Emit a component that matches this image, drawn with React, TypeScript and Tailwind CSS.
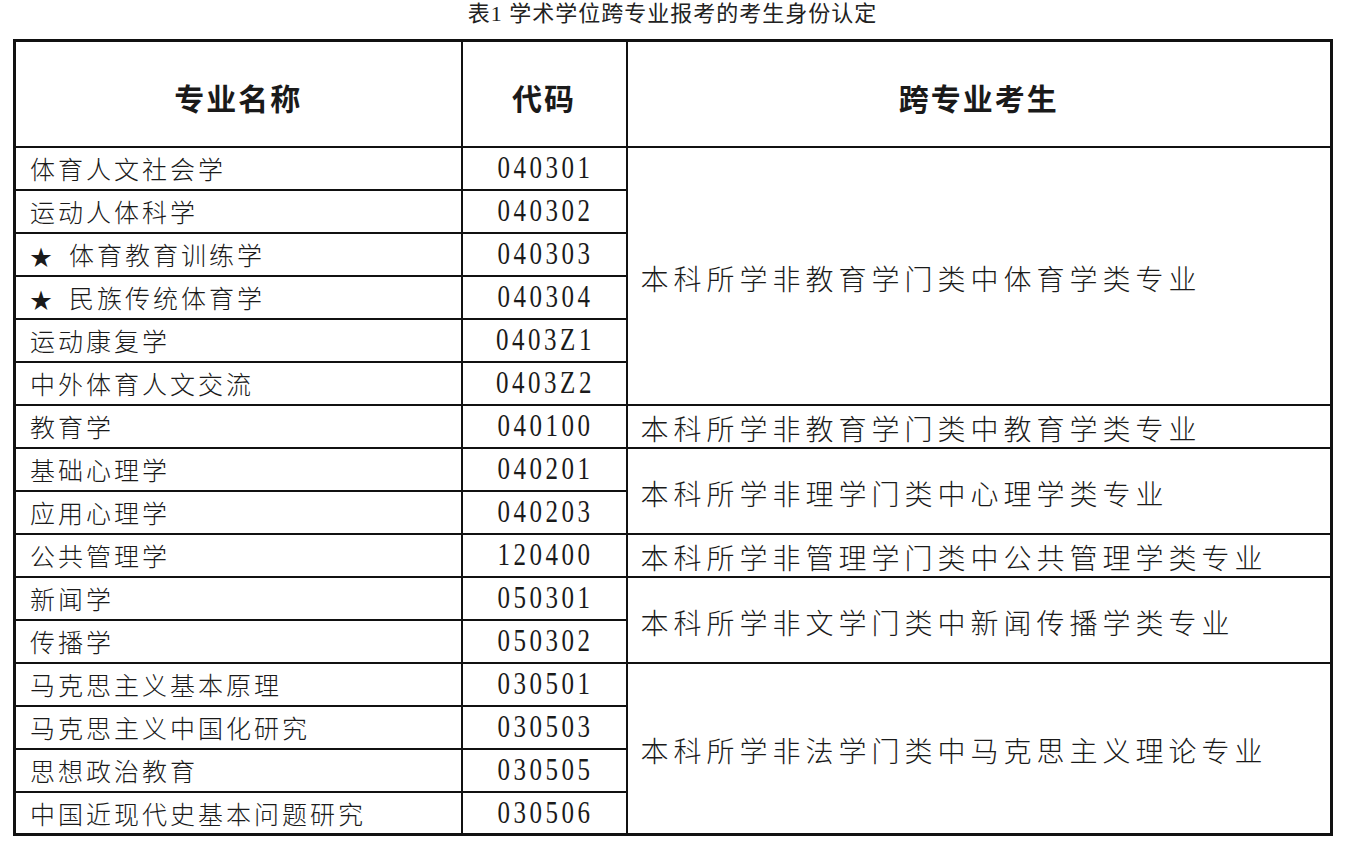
import React from 'react';

type Group = {
  note: string;
  rows: { name: string; code: string; star?: boolean }[];
};

const groups: Group[] = [
  {
    note: '本科所学非教育学门类中体育学类专业',
    rows: [
      { name: '体育人文社会学', code: '040301' },
      { name: '运动人体科学', code: '040302' },
      { name: '体育教育训练学', code: '040303', star: true },
      { name: '民族传统体育学', code: '040304', star: true },
      { name: '运动康复学', code: '0403Z1' },
      { name: '中外体育人文交流', code: '0403Z2' },
    ],
  },
  {
    note: '本科所学非教育学门类中教育学类专业',
    rows: [{ name: '教育学', code: '040100' }],
  },
  {
    note: '本科所学非理学门类中心理学类专业',
    rows: [
      { name: '基础心理学', code: '040201' },
      { name: '应用心理学', code: '040203' },
    ],
  },
  {
    note: '本科所学非管理学门类中公共管理学类专业',
    rows: [{ name: '公共管理学', code: '120400' }],
  },
  {
    note: '本科所学非文学门类中新闻传播学类专业',
    rows: [
      { name: '新闻学', code: '050301' },
      { name: '传播学', code: '050302' },
    ],
  },
  {
    note: '本科所学非法学门类中马克思主义理论专业',
    rows: [
      { name: '马克思主义基本原理', code: '030501' },
      { name: '马克思主义中国化研究', code: '030503' },
      { name: '思想政治教育', code: '030505' },
      { name: '中国近现代史基本问题研究', code: '030506' },
    ],
  },
];

const cjk = "font-['Noto_Sans_CJK_SC',sans-serif]";

export default function App() {
  return (
    <div className="min-h-[845px] w-[1345px] bg-white pt-[2px] text-[#1a1a1a]">
      <h1 className="text-center font-['Liberation_Serif','Noto_Sans_CJK_SC',serif] text-[22px] leading-[24px] tracking-[1px] text-[#222]">
        表1 学术学位跨专业报考的考生身份认定
      </h1>

      <table className="ml-[13px] mt-[13px] w-[1317px] table-fixed border-collapse border-[3px] border-[#111]">
        <colgroup>
          <col className="w-[447px]" />
          <col className="w-[165px]" />
          <col className="w-[705px]" />
        </colgroup>
        <thead>
          <tr className="h-[106px]">
            <th className={`border-2 border-[#111] pt-[8px] text-[30px] font-bold tracking-[2px] ${cjk}`}>专业名称</th>
            <th className={`border-2 border-[#111] pt-[8px] text-[30px] font-bold tracking-[2px] ${cjk}`}>代码</th>
            <th className={`border-2 border-[#111] pt-[8px] text-[30px] font-bold tracking-[2px] ${cjk}`}>跨专业考生</th>
          </tr>
        </thead>
        <tbody>
          {groups.map((g) =>
            g.rows.map((r, i) => (
              <tr key={r.code} className="h-[43px]">
                <td className={`border-2 border-[#111] pl-[14px] text-[25px] font-light leading-[30px] tracking-[3px] ${cjk}`}>
                  {r.star && <span className="mr-[14px] text-[22px]">★</span>}
                  {r.name}
                </td>
                <td className="border-2 border-[#111] text-center">
                  <span className="inline-block scale-y-[1.3] pl-[3px] font-['Liberation_Serif',serif] text-[25px] leading-[30px] tracking-[3.5px]">
                    {r.code}
                  </span>
                </td>
                {i === 0 && (
                  <td
                    rowSpan={g.rows.length}
                    className={`border-2 border-[#111] pl-[13px] pt-[4px] text-[28px] font-light leading-[32px] tracking-[5px] ${cjk}`}
                  >
                    {g.note}
                  </td>
                )}
              </tr>
            ))
          )}
        </tbody>
      </table>
    </div>
  );
}
